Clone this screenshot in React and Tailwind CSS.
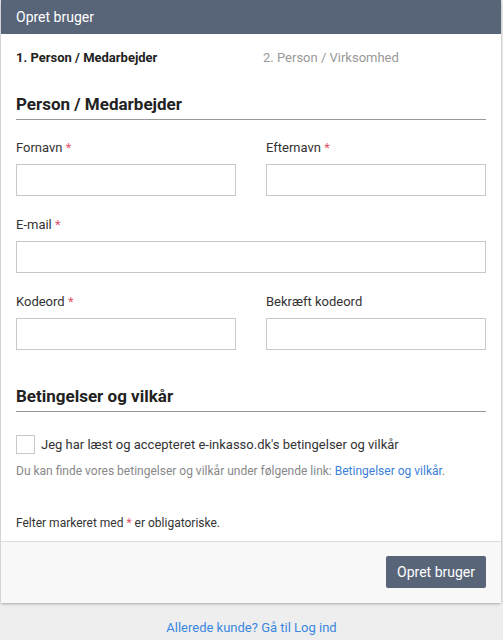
export default function App() {
  const Req = () => <span className="text-[#e0556a]"> *</span>;
  return (
    <div className="min-h-[640px] bg-[#eeeeee] font-['Roboto',sans-serif] text-[#333]">
      <div className="pt-0 pl-[1px] pr-[2px]">
        <div className="bg-white shadow-[0_1px_3px_rgba(0,0,0,0.3)] rounded-b-[2px]">
          <div className="bg-[#586579] h-[34px] px-[15px] flex items-center text-white text-[14px]">Opret bruger</div>
          <div className="px-[15px]">
            <div className="flex pt-[14px] text-[13px] h-[57px]">
              <div className="w-[247px] font-bold text-[#222]">1. Person / Medarbejder</div>
              <div className="text-[#999]">2. Person / Virksomhed</div>
            </div>
            <div className="text-[17px] font-bold text-[#222] border-b border-[#999] pb-[3px] leading-[24px] pt-[1px]">Person / Medarbejder</div>
            <div className="grid grid-cols-2 gap-x-[30px] mt-[20px]">
              <div>
                <div className="text-[13px] leading-[16px] text-[#333]">Fornavn<Req /></div>
                <div className="mt-[8px] h-[32px] border border-[#c8c8c8]" />
              </div>
              <div>
                <div className="text-[13px] leading-[16px] text-[#333]">Efternavn<Req /></div>
                <div className="mt-[8px] h-[32px] border border-[#c8c8c8]" />
              </div>
              <div className="col-span-2 mt-[21px]">
                <div className="text-[13px] leading-[16px] text-[#333]">E-mail<Req /></div>
                <div className="mt-[8px] h-[32px] border border-[#c8c8c8]" />
              </div>
              <div className="mt-[21px]">
                <div className="text-[13px] leading-[16px] text-[#333]">Kodeord<Req /></div>
                <div className="mt-[8px] h-[32px] border border-[#c8c8c8]" />
              </div>
              <div className="mt-[21px]">
                <div className="text-[13px] leading-[16px] text-[#333]">Bekræft kodeord</div>
                <div className="mt-[8px] h-[32px] border border-[#c8c8c8]" />
              </div>
            </div>
            <div className="mt-[34px] text-[17px] font-bold text-[#222] border-b border-[#999] pb-[3px] leading-[24px]">Betingelser og vilkår</div>
            <div className="flex items-center mt-[23px] gap-[6px]">
              <div className="w-[19px] h-[19px] border border-[#c8c8c8] bg-white" />
              <div className="text-[13px] text-[#333]">Jeg har læst og accepteret e-inkasso.dk's betingelser og vilkår</div>
            </div>
            <div className="text-[12px] text-[#888] mt-[7px]">Du kan finde vores betingelser og vilkår under følgende link: <span className="text-[#3a7fd9]">Betingelser og vilkår</span>.</div>
            <div className="text-[12px] text-[#333] mt-[34px] pb-[9px]">Felter markeret med <span className="text-[#e0556a]">*</span> er obligatoriske.</div>
          </div>
          <div className="border-t border-[#dddddd] bg-[#f8f8f8] h-[62px] flex items-center justify-end px-[15px]">
            <div className="bg-[#586579] text-white text-[14px] h-[32px] px-[11px] flex items-center rounded-[2px]">Opret bruger</div>
          </div>
        </div>
      </div>
      <div className="text-center text-[13px] text-[#3a87e0] mt-[15px]">Allerede kunde? Gå til Log ind</div>
    </div>
  );
}
